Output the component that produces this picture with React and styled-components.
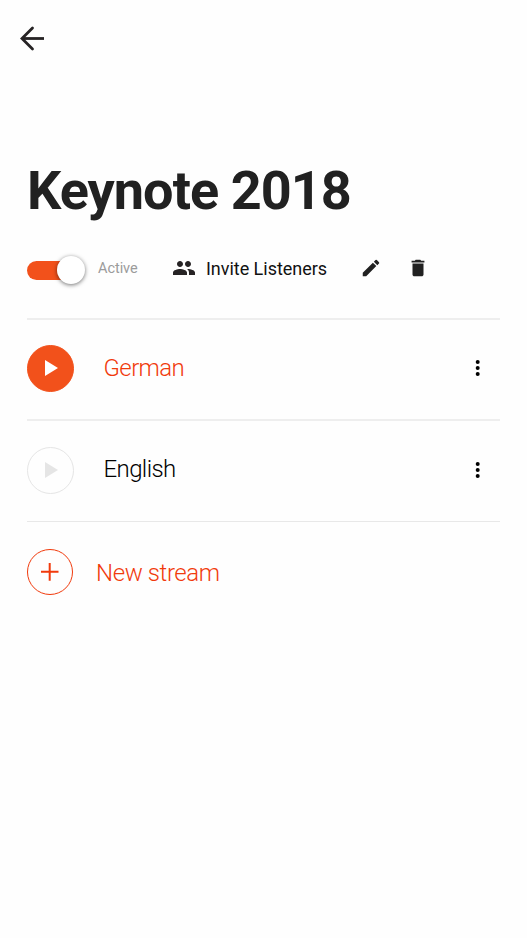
import React, { useState } from 'react'
import styled, { createGlobalStyle } from 'styled-components';
import { MdPeople, MdEdit, MdDelete } from 'react-icons/md';

const GlobalStyle = createGlobalStyle`
  * {
    box-sizing: border-box;
  }

  body {
    margin: 0;
    background-color: #fefefe;
    font-family: Roboto, sans-serif;
    color: #212121;
  }

  button {
    padding: 0;
    border: none;
    background: none;
    font-family: inherit;
    color: inherit;
    cursor: pointer;
  }
`;

const Page = styled.div`
  width: 527px;
  min-height: 938px;
  padding: 23px 27px 0;
`;

const BackButton = styled.button`
  display: block;
  width: 30px;
  height: 30px;
  margin-left: -9px;
`;

const Title = styled.h1`
  margin: 106px 0 0;
  font-size: 54px;
  line-height: 64px;
  font-weight: 700;
  letter-spacing: -0.95px;
  white-space: nowrap;
`;

const Toolbar = styled.div`
  display: flex;
  align-items: center;
  height: 32px;
  margin-top: 29px;
`;

const SwitchTrack = styled.button`
  display: flex;
  align-items: center;
  justify-content: ${props => props.$active ? 'flex-end' : 'flex-start'};
  width: 58px;
  height: 19px;
  margin-top: 4px;
  border-radius: 10px;
  background: linear-gradient(${props => props.$active ? '#f2511b, #f2511b' : '#bdbdbd, #bdbdbd'}) left / 52px 100% no-repeat;
`;

const SwitchThumb = styled.span`
  flex: none;
  width: 28px;
  height: 28px;
  border-radius: 50%;
  background-color: #fff;
  box-shadow: 0 1px 4px rgba(0, 0, 0, 0.55);
`;

const Status = styled.span`
  width: 75px;
  margin-left: 13px;
  font-size: 14.5px;
  letter-spacing: -0.05px;
  color: #9b9b9b;
`;

const InviteButton = styled.button`
  display: flex;
  align-items: center;
  gap: 10px;
  width: 188px;
  margin-left: -1px;
  font-size: 18px;
  letter-spacing: -0.03px;
  color: #111;
  white-space: nowrap;

  svg {
    color: #262324;
  }
`;

const IconButton = styled.button`
  display: flex;
  width: 22px;
  height: 22px;
  margin-right: 24.5px;
`;

const StreamList = styled.div`
  margin-top: 34px;
`;

const StreamRow = styled.div`
  display: flex;
  align-items: center;
  width: 473px;
  height: 101.3px;
  padding-bottom: 1.4px;
  border-top: 2px solid #eee;
`;

const PlayButton = styled.button`
  display: flex;
  align-items: center;
  justify-content: center;
  width: 47px;
  height: 47px;
  border: 1px solid ${props => props.$active ? '#f2511b' : '#e5e5e5'};
  border-radius: 50%;
  background-color: ${props => props.$active ? '#f2511b' : 'transparent'};
  color: ${props => props.$active ? '#fff' : '#e5e5e5'};
`;

const StreamName = styled.span`
  flex: 1;
  margin-left: 29.5px;
  padding-bottom: 2px;
  font-size: 24px;
  font-weight: 300;
  line-height: 28px;
  letter-spacing: -0.6px;
  color: ${props => props.$active ? '#f13a0c' : '#000'};
`;

const MenuButton = styled.button`
  display: flex;
  margin-right: 19px;
  padding-bottom: 1px;
`;

const NewStream = styled.button`
  display: flex;
  align-items: center;
  width: 473px;
  height: 102px;
  border-top: 1px solid #e8e8e8;
  font-size: 24px;
  font-weight: 300;
  letter-spacing: -0.4px;
  color: #f13a0c;
`;

const AddCircle = styled.span`
  display: flex;
  align-items: center;
  justify-content: center;
  width: 46px;
  height: 46px;
  margin-right: 23px;
  border: 1px solid #f13a0c;
  border-radius: 50%;
`;

const NewStreamLabel = styled.span`
  padding-top: 2px;
`;

const streams = [
  { id: 1, name: 'German', active: true },
  { id: 2, name: 'English', active: false },
];

function BackIcon() {
  return (
    <svg width="30" height="30" viewBox="0 0 30 30" fill="none" stroke="#262324" strokeWidth="2.8">
      <path d="M4.5 15.5H26" />
      <path d="M14.5 5L4 15.5L14.5 26" strokeLinecap="round" />
    </svg>
  )
}

function PlayIcon() {
  return (
    <svg width="14" height="17" viewBox="0 0 14 17" fill="currentColor">
      <path d="M1 0L14 8L1 16Z" />
    </svg>
  )
}

function DotsIcon() {
  return (
    <svg width="6" height="18" viewBox="0 0 6 18" fill="#000">
      <circle cx="2.7" cy="3" r="2" />
      <circle cx="2.7" cy="9" r="2" />
      <circle cx="2.7" cy="15" r="2" />
    </svg>
  )
}

function PlusIcon() {
  return (
    <svg width="18" height="18" viewBox="0 0 18 18" stroke="currentColor" strokeWidth="2">
      <path d="M0 8.7H17.5M8.7 0V17.7" />
    </svg>
  )
}

function Stream(props) {
  const { stream } = props;

  return (
    <StreamRow>
      <PlayButton $active={stream.active}><PlayIcon /></PlayButton>
      <StreamName $active={stream.active}>{stream.name}</StreamName>
      <MenuButton><DotsIcon /></MenuButton>
    </StreamRow>
  )
}

function App() {
  const [ active, setActive ] = useState(true);

  return (
    <Page>
      <GlobalStyle />
      <BackButton><BackIcon /></BackButton>
      <Title>Keynote 2018</Title>
      <Toolbar>
        <SwitchTrack $active={active} onClick={() => setActive(!active)}>
          <SwitchThumb />
        </SwitchTrack>
        <Status>{active ? 'Active' : 'Inactive'}</Status>
        <InviteButton>
          <MdPeople size={24} />
          Invite Listeners
        </InviteButton>
        <IconButton><MdEdit size={22} /></IconButton>
        <IconButton><MdDelete size={22} /></IconButton>
      </Toolbar>
      <StreamList>
        {streams.map(stream => <Stream key={stream.id} stream={stream} />)}
        <NewStream>
          <AddCircle><PlusIcon /></AddCircle>
          <NewStreamLabel>New stream</NewStreamLabel>
        </NewStream>
      </StreamList>
    </Page>
  )
}

export default App
